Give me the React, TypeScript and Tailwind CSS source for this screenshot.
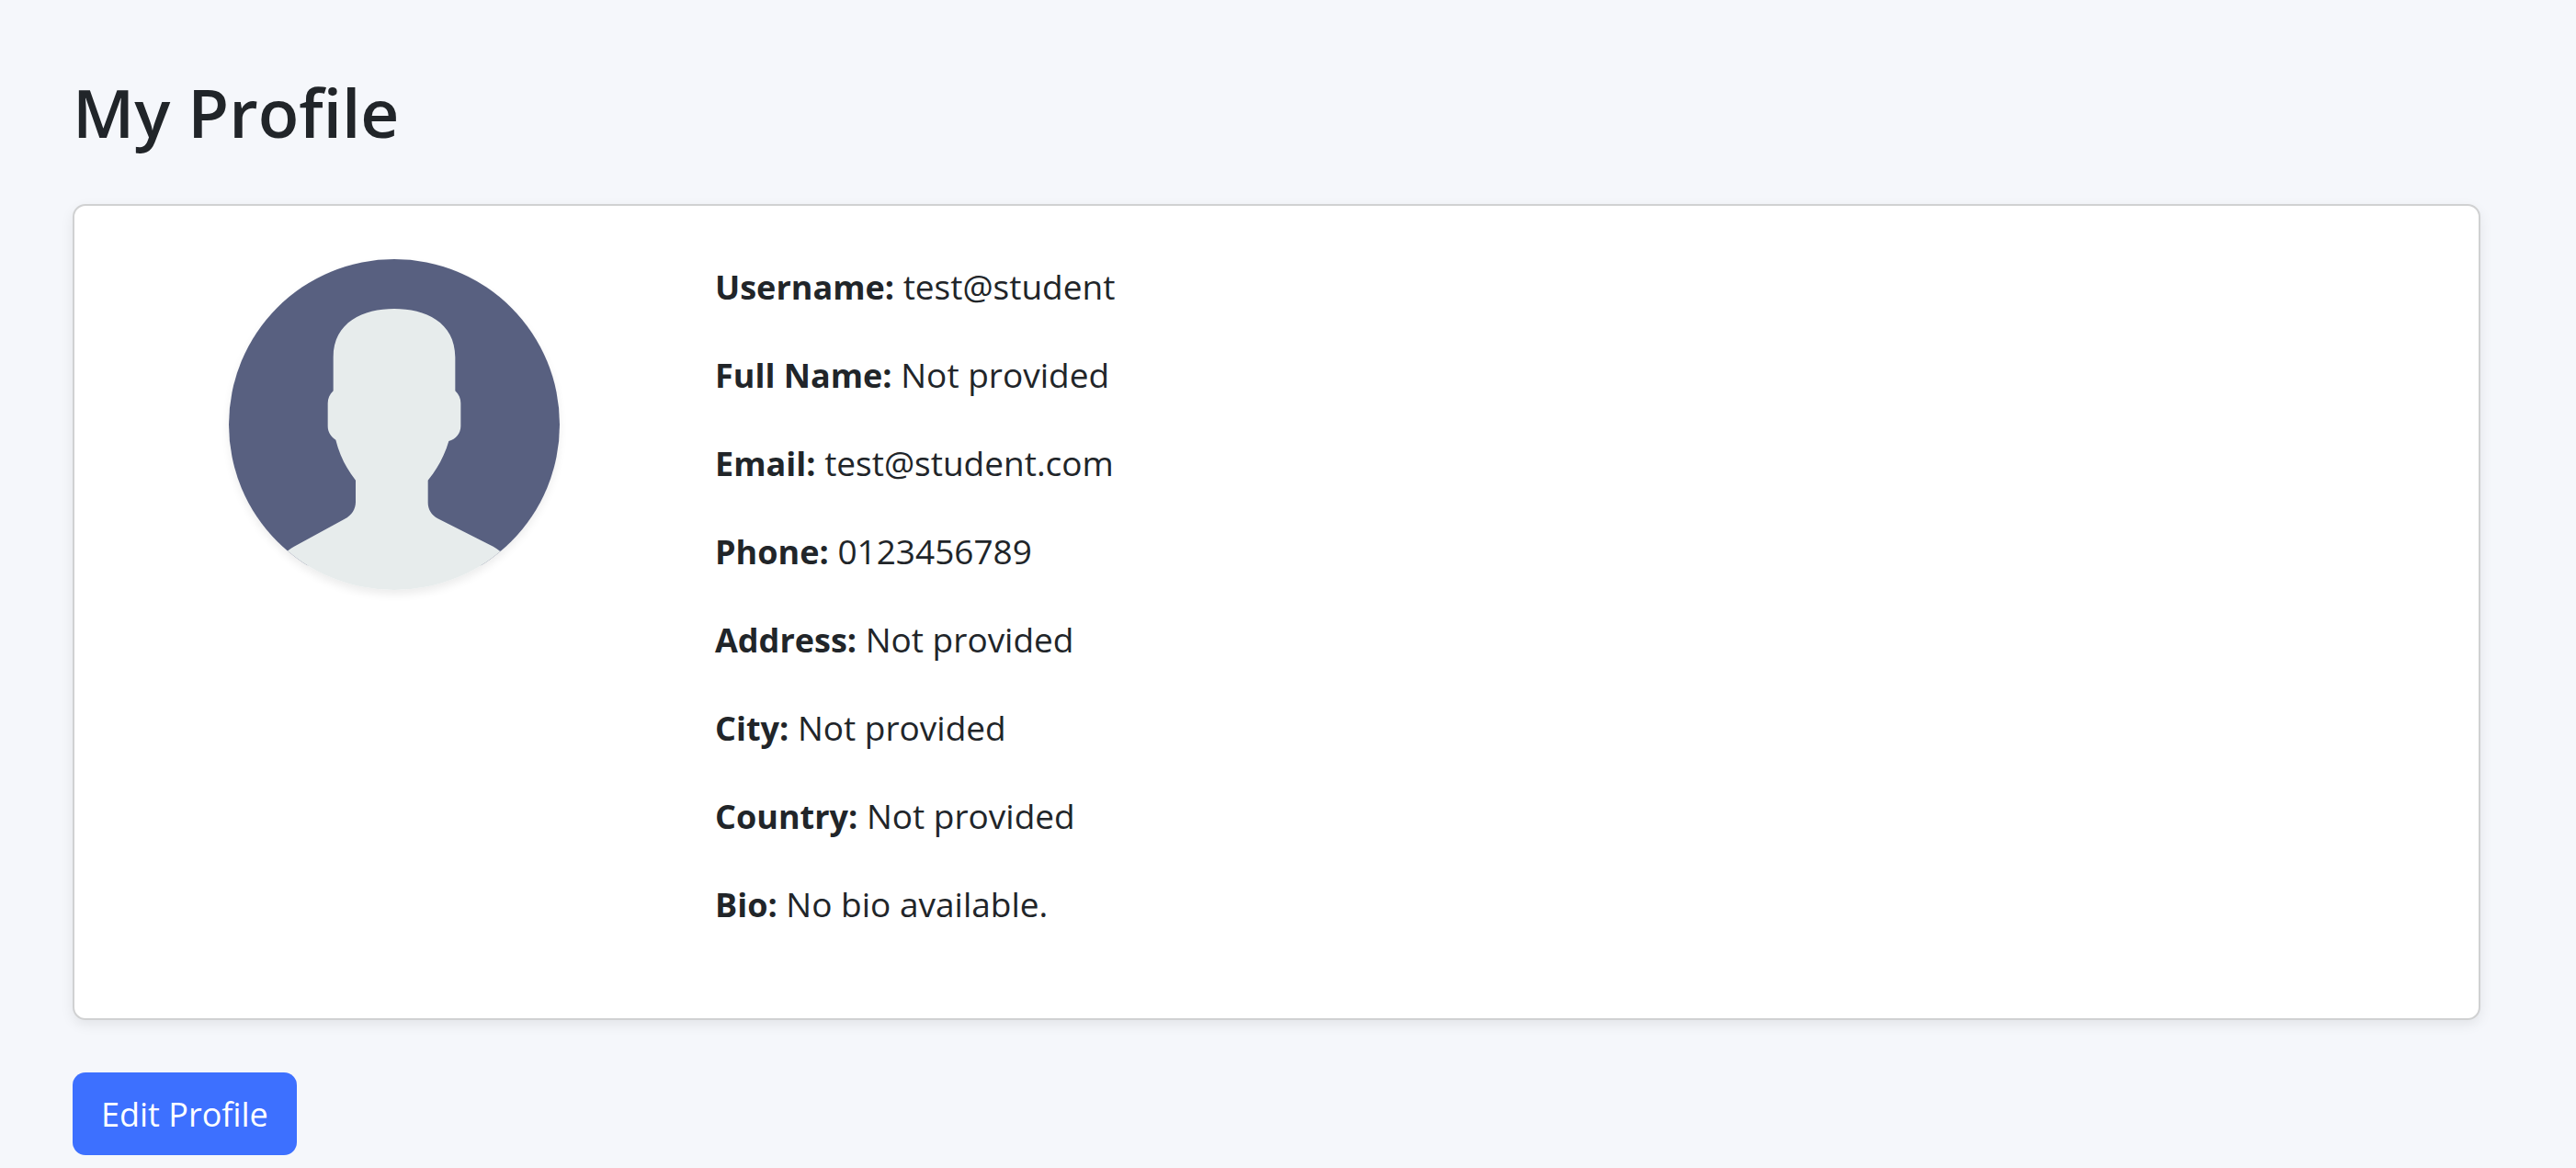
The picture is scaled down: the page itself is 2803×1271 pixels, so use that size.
const details: { label: string; value: string }[] = [
  { label: "Username:", value: "test@student" },
  { label: "Full Name:", value: "Not provided" },
  { label: "Email:", value: "test@student.com" },
  { label: "Phone:", value: "0123456789" },
  { label: "Address:", value: "Not provided" },
  { label: "City:", value: "Not provided" },
  { label: "Country:", value: "Not provided" },
  { label: "Bio:", value: "No bio available." },
];

function Avatar() {
  return (
    <svg
      viewBox="0 0 1080 1080"
      role="img"
      aria-label="Profile picture"
      className="size-[360px] overflow-hidden rounded-full shadow-[0_5px_10px_rgba(0,0,0,0.075)]"
    >
      <rect width="1080" height="1000" fill="#586080" />
      <path
        fill="#e7ecec"
        d="M540 162C640 162 739 205 739 320V430C751 441 757 455 757 470V545C757 568 741 588 718 594C704 642 681 684 650 722V795C650 817 662 836 682 847L863 938Q875 945 885 953L900 953L1080 1000V1080H0V1000L180 953L193 952Q202 944 213 938L378 848C401 837 414 816 414 792V722C384 684 361 640 349 590C333 579 323 564 323 545V470C323 455 329 441 341 430V320C341 205 440 162 540 162Z"
      />
    </svg>
  );
}

export default function App() {
  return (
    <main className="min-h-screen bg-[#f5f7fb] pt-[75px] pr-[104px] pb-3 pl-[79px] font-['Open_Sans',sans-serif] text-[#212529]">
      <h1 className="mb-[53px] text-[73px] leading-[94px] font-semibold">My Profile</h1>

      <section className="rounded-[14px] border-2 border-[#d0d1d2] bg-white p-[58px] shadow-[0_5px_14px_rgba(0,0,0,0.08)]">
        <div className="-mx-[30px] flex">
          <div className="flex w-1/4 items-start justify-center px-[29px]">
            <Avatar />
          </div>
          <div className="w-3/4 px-[29px]">
            {details.map(({ label, value }) => (
              <p key={label} className="mb-[36px] text-[37px] leading-[60px]">
                <strong className="text-[36px] leading-none font-bold">{label}</strong> {value}
              </p>
            ))}
          </div>
        </div>
      </section>

      <button
        type="button"
        className="mt-[57px] cursor-pointer rounded-[14px] bg-[#3d70ff] px-[31px] pt-4 pb-[14px] text-[36px] leading-[60px] text-white"
      >
        Edit Profile
      </button>
    </main>
  );
}
